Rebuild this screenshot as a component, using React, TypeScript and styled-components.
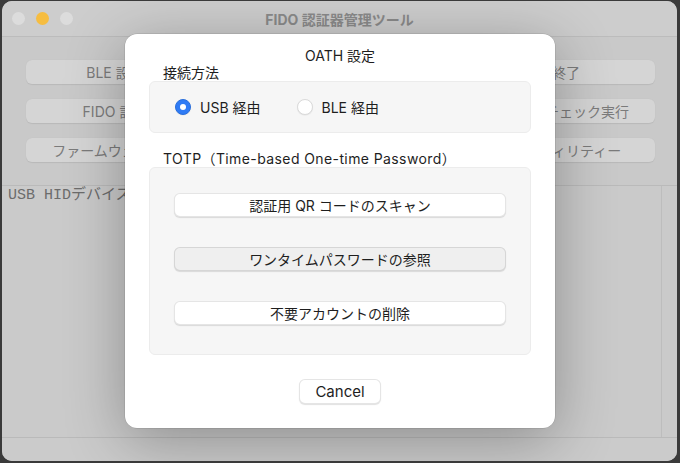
import styled, { createGlobalStyle } from "styled-components"

const GlobalStyle = createGlobalStyle`
  html, body {
    margin: 0;
    padding: 0;
    background: #3a3a3a;
  }
  body {
    width: 680px;
    height: 463px;
    overflow: hidden;
    font-family: Inter, "Noto Sans CJK JP", sans-serif;
  }
`

// middle column sits under the sheet, so its labels never show
const toolButtons = [
  "BLE 設定", "", "終了",
  "FIDO 設定", "", "ヘルスチェック実行",
  "ファームウェア更新", "", "ユーティリティー",
]

const actions = [
  { label: "認証用 QR コードのスキャン", active: false },
  { label: "ワンタイムパスワードの参照", active: true },
  { label: "不要アカウントの削除", active: false },
]

export default function App() {
  return (
    <>
      <GlobalStyle />
      <Desktop>
        <Window>
          <TitleBar>
            <Lights>
              <Light />
              <Light $color="#f6bd41" />
              <Light />
            </Lights>
            <WindowTitle>FIDO 認証器管理ツール</WindowTitle>
          </TitleBar>
          <ButtonPanel>
            {toolButtons.map((t, i) => (
              <ToolButton key={i}>{t}</ToolButton>
            ))}
          </ButtonPanel>
          <LogArea>
            <LogText>USB HIDデバイスに接続されました。</LogText>
            <ScrollTrack />
          </LogArea>
          <StatusBar />

          <Sheet>
            <SheetTitle>OATH 設定</SheetTitle>
            <SectionLabel>接続方法</SectionLabel>
            <RadioBox>
              <RadioItem>
                <RadioCircle $checked />
                USB 経由
              </RadioItem>
              <RadioItem>
                <RadioCircle />
                BLE 経由
              </RadioItem>
            </RadioBox>
            <SectionLabel $spaced>TOTP（Time-based One-time Password）</SectionLabel>
            <ActionBox>
              {actions.map((a) => (
                <ActionButton key={a.label} $active={a.active}>
                  {a.label}
                </ActionButton>
              ))}
            </ActionBox>
            <Footer>
              <CancelButton>Cancel</CancelButton>
            </Footer>
          </Sheet>
        </Window>
      </Desktop>
    </>
  )
}

const Desktop = styled.div`
  width: 680px;
  height: 463px;
  box-sizing: border-box;
  padding: 1px 3px 2px 2px;
`

const Window = styled.div`
  position: relative;
  height: 100%;
  border-radius: 10px;
  overflow: hidden;
  background: #c9c9c9;
  display: flex;
  flex-direction: column;
`

const TitleBar = styled.div`
  height: 35px;
  flex-shrink: 0;
  display: grid;
  grid-template-columns: 1fr auto 1fr;
  align-items: center;
  background: #cdcdcd;
  border-bottom: 1px solid #bcbcbc;
`

const Lights = styled.div`
  display: flex;
  gap: 11px;
  padding-left: 10px;
`

const Light = styled.span<{ $color?: string }>`
  width: 13px;
  height: 13px;
  border-radius: 50%;
  background: ${(p) => p.$color || "#dcdcdc"};
`

const WindowTitle = styled.div`
  font-size: 14px;
  font-weight: 700;
  color: #8a8a8a;
`

const ButtonPanel = styled.div`
  display: grid;
  grid-template-columns: repeat(3, 178px);
  justify-content: space-between;
  row-gap: 15px;
  padding: 23px 22px 23px 24px;
  flex-shrink: 0;
`

const ToolButton = styled.div`
  height: 24px;
  border-radius: 6px;
  background: #d5d5d5;
  box-shadow: 0 0.5px 1px rgba(0, 0, 0, 0.08);
  display: flex;
  align-items: center;
  justify-content: center;
  font-size: 14px;
  color: #7b7b7b;
`

const LogArea = styled.div`
  flex: 1;
  display: flex;
  border-top: 1px solid #bababa;
  border-bottom: 1px solid #bababa;
  background: #cacaca;
`

const LogText = styled.div`
  flex: 1;
  padding: 1px 6px;
  font-family: "Liberation Mono", monospace, "Noto Sans CJK JP";
  font-size: 15px;
  line-height: 17px;
  color: #6c6c6c;
  white-space: nowrap;
  overflow: hidden;
`

const ScrollTrack = styled.div`
  width: 15px;
  border-left: 1px solid #bdbdbd;
`

const StatusBar = styled.div`
  height: 23px;
  flex-shrink: 0;
  background: #cbcbcb;
`

const Sheet = styled.div`
  position: absolute;
  left: 123px;
  top: 33px;
  width: 430px;
  height: 394px;
  box-sizing: border-box;
  padding: 13px 24px 24px;
  display: flex;
  flex-direction: column;
  background: #ffffff;
  border-radius: 12px;
  box-shadow: 0 12px 60px rgba(0, 0, 0, 0.3), 0 0 0 0.5px rgba(0, 0, 0, 0.15);
  color: #1e1e1e;
  font-size: 14px;
  line-height: 17px;
`

const SheetTitle = styled.div`
  text-align: center;
`

const SectionLabel = styled.div<{ $spaced?: boolean }>`
  padding-left: 14px;
  margin-top: ${(p) => (p.$spaced ? "17px" : "0")};
  letter-spacing: ${(p) => (p.$spaced ? "0.4px" : "0")};
`

const GroupBox = styled.div`
  box-sizing: border-box;
  background: #f6f6f6;
  border: 1px solid #ececec;
  border-radius: 6px;
`

const RadioBox = styled(GroupBox)`
  height: 52px;
  display: flex;
  align-items: center;
  gap: 36px;
  padding: 0 25px;
`

const RadioItem = styled.label`
  display: flex;
  align-items: center;
  gap: 9px;
`

const RadioCircle = styled.span<{ $checked?: boolean }>`
  width: 16px;
  height: 16px;
  box-sizing: border-box;
  border-radius: 50%;
  display: flex;
  align-items: center;
  justify-content: center;
  background: ${(p) => (p.$checked ? "#2f7bf5" : "#ffffff")};
  border: 1px solid ${(p) => (p.$checked ? "#2a6fdc" : "#dadada")};
  box-shadow: 0 0.5px 1px rgba(0, 0, 0, 0.08);

  &::after {
    content: "";
    width: 6px;
    height: 6px;
    border-radius: 50%;
    background: #ffffff;
    display: ${(p) => (p.$checked ? "block" : "none")};
  }
`

const ActionBox = styled(GroupBox)`
  display: flex;
  flex-direction: column;
  gap: 30px;
  padding: 25px 24px 29px;
`

const PushButton = styled.div`
  height: 24px;
  box-sizing: border-box;
  border-radius: 6px;
  border: 0.5px solid rgba(0, 0, 0, 0.1);
  box-shadow: 0 1px 1px rgba(0, 0, 0, 0.12);
  display: flex;
  align-items: center;
  justify-content: center;
  font-size: 14px;
  color: #1e1e1e;
`

const ActionButton = styled(PushButton)<{ $active?: boolean }>`
  background: ${(p) => (p.$active ? "#efefef" : "#ffffff")};
`

const Footer = styled.div`
  margin-top: 24px;
  display: flex;
  justify-content: center;
`

const CancelButton = styled(PushButton)`
  width: 82px;
  height: 25px;
  background: #ffffff;
  font-size: 15px;
`
